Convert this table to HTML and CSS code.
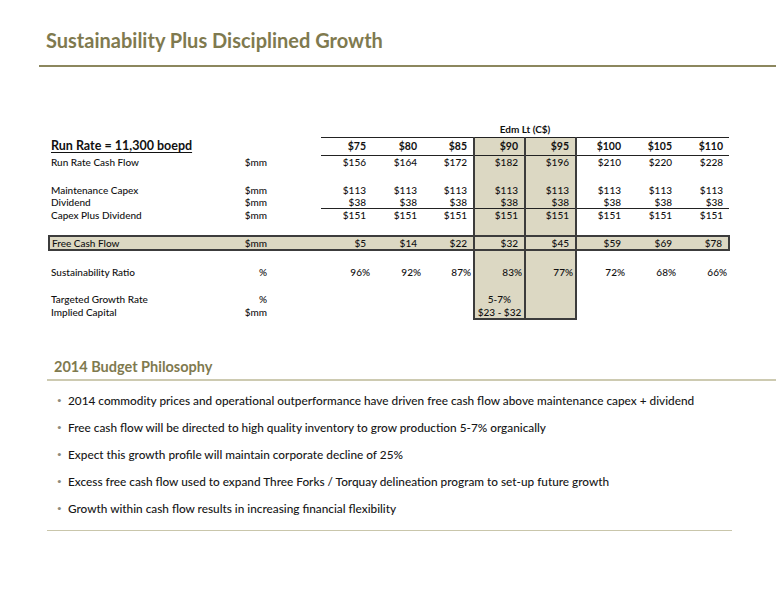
FILE: index.html
```html
<!DOCTYPE html>
<html>
<head>
<meta charset="utf-8">
<link rel="stylesheet" href="styles.css">
</head>
<body>
<div class="page">
  <header class="title-bar">
    <h1 class="title">Sustainability Plus Disciplined Growth</h1>
  </header>

  <table class="grid">
    <colgroup>
      <col class="c-label"><col class="c-unit"><col class="c-gap">
      <col class="c-num"><col class="c-num"><col class="c-num"><col class="c-num">
      <col class="c-num"><col class="c-num"><col class="c-num"><col class="c-num">
    </colgroup>
    <tr class="r-edm">
      <td></td><td></td><td></td>
      <td colspan="8" class="edm">Edm Lt (C$)</td>
    </tr>
    <tr class="r-head">
      <td class="lab runrate"><span>Run Rate = 11,300 boepd</span></td><td></td><td></td>
      <td class="num hd">$75</td><td class="num hd">$80</td><td class="num hd">$85</td>
      <td class="num hd sh">$90</td><td class="num hd sh">$95</td>
      <td class="num hd">$100</td><td class="num hd">$105</td><td class="num hd">$110</td>
    </tr>
    <tr class="r-14">
      <td class="lab">Run Rate Cash Flow</td><td class="unit">$mm</td><td></td>
      <td class="num">$156</td><td class="num">$164</td><td class="num">$172</td>
      <td class="num sh">$182</td><td class="num sh">$196</td>
      <td class="num">$210</td><td class="num">$220</td><td class="num">$228</td>
    </tr>
    <tr class="r-14">
      <td></td><td></td><td></td><td></td><td></td><td></td>
      <td class="sh"></td><td class="sh"></td><td></td><td></td><td></td>
    </tr>
    <tr class="r-13">
      <td class="lab">Maintenance Capex</td><td class="unit">$mm</td><td></td>
      <td class="num">$113</td><td class="num">$113</td><td class="num">$113</td>
      <td class="num sh">$113</td><td class="num sh">$113</td>
      <td class="num">$113</td><td class="num">$113</td><td class="num">$113</td>
    </tr>
    <tr class="r-12">
      <td class="lab">Dividend</td><td class="unit">$mm</td><td></td>
      <td class="num ul">$38</td><td class="num ul">$38</td><td class="num ul">$38</td>
      <td class="num sh ul">$38</td><td class="num sh ul">$38</td>
      <td class="num ul">$38</td><td class="num ul">$38</td><td class="num ul">$38</td>
    </tr>
    <tr class="r-13">
      <td class="lab">Capex Plus Dividend</td><td class="unit">$mm</td><td></td>
      <td class="num">$151</td><td class="num">$151</td><td class="num">$151</td>
      <td class="num sh">$151</td><td class="num sh">$151</td>
      <td class="num">$151</td><td class="num">$151</td><td class="num">$151</td>
    </tr>
    <tr class="r-14">
      <td></td><td></td><td></td><td></td><td></td><td></td>
      <td class="sh"></td><td class="sh"></td><td></td><td></td><td></td>
    </tr>
    <tr class="r-14 fcf">
      <td class="lab first">Free Cash Flow</td><td class="unit">$mm</td><td></td>
      <td class="num">$5</td><td class="num">$14</td><td class="num">$22</td>
      <td class="num sh">$32</td><td class="num sh">$45</td>
      <td class="num">$59</td><td class="num">$69</td><td class="num last">$78</td>
    </tr>
    <tr class="r-15">
      <td></td><td></td><td></td><td></td><td></td><td></td>
      <td class="sh"></td><td class="sh"></td><td></td><td></td><td></td>
    </tr>
    <tr class="r-14">
      <td class="lab">Sustainability Ratio</td><td class="unit">%</td><td></td>
      <td class="num pct">96%</td><td class="num pct">92%</td><td class="num pct">87%</td>
      <td class="num pct sh">83%</td><td class="num pct sh">77%</td>
      <td class="num pct">72%</td><td class="num pct">68%</td><td class="num pct">66%</td>
    </tr>
    <tr class="r-13">
      <td></td><td></td><td></td><td></td><td></td><td></td>
      <td class="sh"></td><td class="sh"></td><td></td><td></td><td></td>
    </tr>
    <tr class="r-14">
      <td class="lab">Targeted Growth Rate</td><td class="unit">%</td><td></td>
      <td></td><td></td><td></td>
      <td class="ctr sh">5-7%</td><td class="sh"></td>
      <td></td><td></td><td></td>
    </tr>
    <tr class="r-12 end">
      <td class="lab">Implied Capital</td><td class="unit">$mm</td><td></td>
      <td></td><td></td><td></td>
      <td class="ctr sh">$23 - $32</td><td class="sh"></td>
      <td></td><td></td><td></td>
    </tr>
  </table>

  <section class="philosophy">
    <h2 class="sub">2014 Budget Philosophy</h2>
    <ul class="bullets">
      <li><span class="dot">•</span><span>2014 commodity prices and operational outperformance have driven free cash flow above maintenance capex + dividend</span></li>
      <li><span class="dot">•</span><span>Free cash flow will be directed to high quality inventory to grow production 5-7% organically</span></li>
      <li><span class="dot">•</span><span>Expect this growth profile will maintain corporate decline of 25%</span></li>
      <li><span class="dot">•</span><span>Excess free cash flow used to expand Three Forks / Torquay delineation program to set-up future growth</span></li>
      <li><span class="dot">•</span><span>Growth within cash flow results in increasing financial flexibility</span></li>
    </ul>
  </section>
</div>
</body>
</html>
```

FILE: styles.css
```css
* { box-sizing: border-box; }
html, body { margin: 0; padding: 0; background: #ffffff; }
body { font-family: Lato, "Open Sans", sans-serif; color: #141414; }
.page { width: 776px; height: 600px; overflow: hidden; }

.title-bar {
  margin-left: 39px;
  padding-top: 28px;
  padding-bottom: 13px;
  border-bottom: 2px solid #8c875e;
}
.title {
  margin: 0 0 0 7px;
  font-size: 20px;
  line-height: 24px;
  font-weight: 700;
  color: #7f7a4f;
}

.grid {
  margin: 54px 0 0 48px;
  border-collapse: collapse;
  table-layout: fixed;
  width: 680px;
  font-size: 10px;
  font-weight: 500;
  color: #111;
}
.c-label { width: 172px; }
.c-unit { width: 52px; }
.c-gap { width: 48px; }
.c-num { width: 51px; }
.grid td { padding: 0; white-space: nowrap; line-height: 12px; vertical-align: middle; }

.r-edm td { height: 16px; vertical-align: bottom; padding-bottom: 2px; }
.r-head td { height: 18px; }
.r-12 td { height: 12px; }
.r-13 td { height: 13px; }
.r-14 td { height: 14px; }
.r-15 td { height: 15px; }

.edm { text-align: center; font-weight: 700; }
.lab { padding-left: 2px !important; }
.runrate { font-size: 12.5px; font-weight: 700; }
.runrate span { text-decoration: underline; text-underline-offset: 2px; }
.unit { text-align: right; padding-right: 6px !important; }
.num { text-align: right; padding-right: 6px !important; }
.pct { padding-right: 2px !important; }
.ctr { text-align: center; }
.hd { font-weight: 700; font-size: 10.5px; border-top: 1px solid #222; border-bottom: 1px solid #222; }
.ul { border-bottom: 1px solid #222; }

.sh {
  background: #dcd8c3;
  border-left: 2px solid #3c3c3c;
  border-right: 2px solid #3c3c3c;
}
.end .sh { border-bottom: 2px solid #3c3c3c; }

.fcf td { background: #dcd8c3; border-top: 2px solid #3c3c3c; border-bottom: 2px solid #3c3c3c; }
.fcf .first { border-left: 2px solid #3c3c3c; }
.fcf .last { border-right: 2px solid #3c3c3c; }

.philosophy { margin: 38px 44px 0 47px; border-bottom: 1px solid #c9c6ab; }
.sub {
  margin: 0;
  padding: 0 0 3px 7px;
  font-size: 14.5px;
  line-height: 18px;
  font-weight: 700;
  color: #7f7a4f;
  border-bottom: 2px solid #cdcab1;
  margin-right: -44px;
}
.bullets {
  list-style: none;
  margin: 6px 0 0 0;
  padding: 0 0 8px 10px;
}
.bullets li {
  display: flex;
  font-size: 11.8px;
  font-weight: 500;
  line-height: 27px;
  height: 27px;
  color: #161616;
}
.dot { width: 11px; flex: none; color: #8d8b7c; font-size: 8px; }
```
